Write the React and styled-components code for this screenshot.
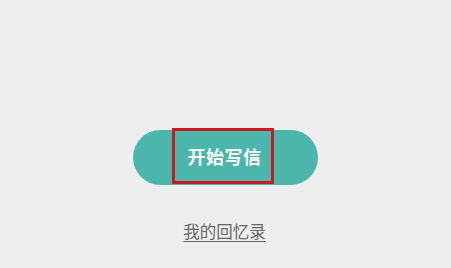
import React from 'react';
import styled, { createGlobalStyle } from 'styled-components';

const GlobalStyle = createGlobalStyle`
  html, body {
    margin: 0;
    padding: 0;
    background: #eeeeee;
    font-family: "Noto Sans CJK SC", "Noto Sans", sans-serif;
  }
`;

const Page = styled.div`
  height: 268px;
  display: flex;
  flex-direction: column;
  align-items: center;
  padding-top: 130px;
  box-sizing: border-box;
`;

const StartButton = styled.button`
  width: 185px;
  height: 55px;
  margin-left: -1px;
  border: none;
  border-radius: 28px;
  background: #4db6ac;
  display: flex;
  align-items: center;
  justify-content: center;
  padding: 0;
  cursor: pointer;
`;

const Label = styled.span`
  box-sizing: border-box;
  width: 102px;
  height: 56px;
  margin: -3px 5px 0 0;
  border: 3px solid #cc1a1a;
  display: flex;
  align-items: center;
  justify-content: center;
  padding-left: 4px;
  color: #ffffff;
  font-family: "Noto Sans CJK SC", sans-serif;
  font-size: 18px;
  font-weight: 700;
  letter-spacing: 0.5px;
`;

const MemoirLink = styled.a`
  margin-top: 35px;
  margin-left: -2px;
  color: #666666;
  font-size: 16.5px;
  line-height: 22px;
  text-decoration: underline;
  text-underline-offset: 3px;
  cursor: pointer;
`;

export default function App() {
  return (
    <>
      <GlobalStyle />
      <Page>
        <StartButton>
          <Label>开始写信</Label>
        </StartButton>
        <MemoirLink>我的回忆录</MemoirLink>
      </Page>
    </>
  );
}
